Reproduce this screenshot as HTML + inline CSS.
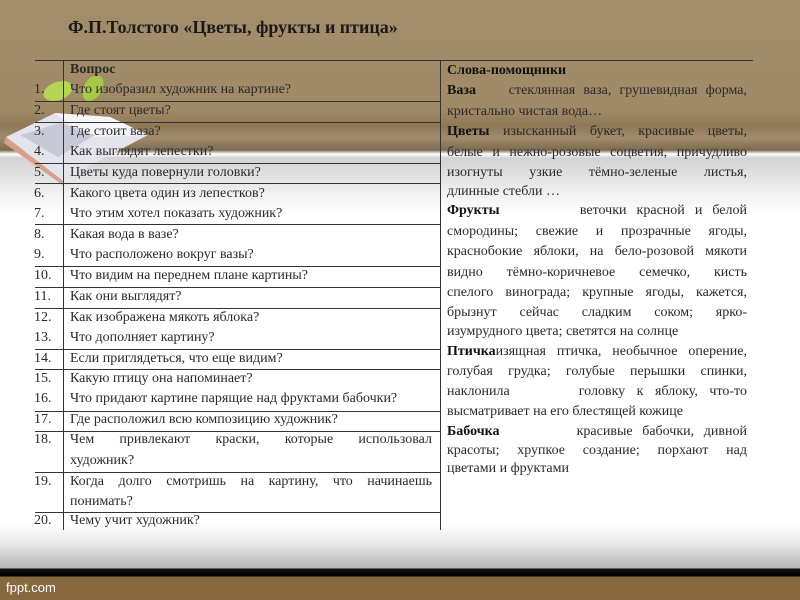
<!DOCTYPE html>
<html><head><meta charset="utf-8"><style>
*{margin:0;padding:0;box-sizing:border-box}
body{width:800px;height:600px;overflow:hidden;position:relative;font-family:"Liberation Serif",serif;color:#222;
background:linear-gradient(to bottom,#a38e6c 0px,#9f8966 110px,#8e7857 126px,#a08b6b 138px,#7d6a50 150px,#ffffff 154px,#d2d2d2 158px,#f2f2f2 195px,#ffffff 215px,#ffffff 525px,#e6e6e6 545px,#b4b4b4 568px,#111 569px,#000 576px,#86693f 577px,#86693f 600px);}
.t{position:absolute;font-size:14px;line-height:20px;white-space:nowrap;color:#2a2a2a}
.h{position:absolute;height:1px;background:#333}
.v{position:absolute;width:1px;background:#333}
.r{position:absolute;left:447px;width:300px;font-size:14px;line-height:20px;text-align:justify;text-align-last:justify;white-space:nowrap;color:#2a2a2a}
.r.l{text-align-last:left}
b{color:#111}
</style></head><body>
<div class="t" style="left:68px;top:17px;font-size:18px;font-weight:bold;color:#1a1a1a">Ф.П.Толстого «Цветы, фрукты и птица»</div>

<svg style="position:absolute;left:0;top:75px" width="160" height="115" viewBox="0 0 160 115">
<ellipse cx="58" cy="16" rx="15" ry="9" fill="#b8dc50" opacity="0.9" transform="rotate(-20 58 16)"/>
<ellipse cx="93" cy="13" rx="9" ry="14" fill="#a6d040" opacity="0.9" transform="rotate(30 93 13)"/>
<path d="M6 62 L55 38 L110 42 L148 60 L62 105 Z" fill="#e4e4ec"/>
<path d="M6 62 L62 105 L64 111 L4 68 Z" fill="#d8a08a"/>
<path d="M55 38 L110 42 L148 60 L88 62 Z" fill="#f6f6fa"/>
<path d="M20 60 L60 48 L95 60 L58 82 Z" fill="#c8c9d6"/>
</svg>

<div class="h" style="left:35px;width:718px;top:60px"></div>
<div class="h" style="left:35px;width:405px;top:101px"></div>
<div class="h" style="left:35px;width:405px;top:122px"></div>
<div class="h" style="left:35px;width:405px;top:163px"></div>
<div class="h" style="left:35px;width:405px;top:183px"></div>
<div class="h" style="left:35px;width:405px;top:224px"></div>
<div class="h" style="left:35px;width:405px;top:266px"></div>
<div class="h" style="left:35px;width:405px;top:287px"></div>
<div class="h" style="left:35px;width:405px;top:308px"></div>
<div class="h" style="left:35px;width:405px;top:349px"></div>
<div class="h" style="left:35px;width:405px;top:369px"></div>
<div class="h" style="left:35px;width:405px;top:411px"></div>
<div class="h" style="left:35px;width:405px;top:431px"></div>
<div class="h" style="left:35px;width:405px;top:472px"></div>
<div class="h" style="left:35px;width:405px;top:512px"></div>
<div class="v" style="left:63px;top:60px;height:470px"></div>
<div class="v" style="left:440px;top:60px;height:470px"></div>

<div class="t" style="left:70px;top:60px;font-weight:bold">Вопрос</div>
<div class="t" style="left:70px;top:80px">Что изобразил художник на картине?</div>
<div class="t" style="left:70px;top:101px">Где стоят цветы?</div>
<div class="t" style="left:70px;top:122px">Где стоит ваза?</div>
<div class="t" style="left:70px;top:142px">Как выглядят лепестки?</div>
<div class="t" style="left:70px;top:163px">Цветы куда повернули головки?</div>
<div class="t" style="left:70px;top:184px">Какого цвета один из лепестков?</div>
<div class="t" style="left:70px;top:204px">Что этим хотел показать художник?</div>
<div class="t" style="left:70px;top:225px">Какая вода в вазе?</div>
<div class="t" style="left:70px;top:245px">Что расположено вокруг вазы?</div>
<div class="t" style="left:70px;top:266px">Что видим на переднем плане картины?</div>
<div class="t" style="left:70px;top:287px">Как они выглядят?</div>
<div class="t" style="left:70px;top:308px">Как изображена мякоть яблока?</div>
<div class="t" style="left:70px;top:328px">Что дополняет картину?</div>
<div class="t" style="left:70px;top:349px">Если приглядеться, что еще видим?</div>
<div class="t" style="left:70px;top:369px">Какую птицу она напоминает?</div>
<div class="t" style="left:70px;top:389px">Что придают картине парящие над фруктами бабочки?</div>
<div class="t" style="left:70px;top:410px">Где расположил всю композицию художник?</div>
<div class="t" style="left:70px;top:430px;width:362px;text-align:justify;text-align-last:justify">Чем привлекают краски, которые использовал</div>
<div class="t" style="left:70px;top:451px">художник?</div>
<div class="t" style="left:70px;top:472px;width:362px;text-align:justify;text-align-last:justify">Когда долго смотришь на картину, что начинаешь</div>
<div class="t" style="left:70px;top:492px">понимать?</div>
<div class="t" style="left:70px;top:511px">Чему учит художник?</div>

<div class="t" style="left:34px;top:80px">1.</div>
<div class="t" style="left:34px;top:101px">2.</div>
<div class="t" style="left:34px;top:122px">3.</div>
<div class="t" style="left:34px;top:142px">4.</div>
<div class="t" style="left:34px;top:163px">5.</div>
<div class="t" style="left:34px;top:184px">6.</div>
<div class="t" style="left:34px;top:204px">7.</div>
<div class="t" style="left:34px;top:225px">8.</div>
<div class="t" style="left:34px;top:245px">9.</div>
<div class="t" style="left:34px;top:266px">10.</div>
<div class="t" style="left:34px;top:287px">11.</div>
<div class="t" style="left:34px;top:308px">12.</div>
<div class="t" style="left:34px;top:328px">13.</div>
<div class="t" style="left:34px;top:349px">14.</div>
<div class="t" style="left:34px;top:369px">15.</div>
<div class="t" style="left:34px;top:389px">16.</div>
<div class="t" style="left:34px;top:410px">17.</div>
<div class="t" style="left:34px;top:430px">18.</div>
<div class="t" style="left:34px;top:472px">19.</div>
<div class="t" style="left:34px;top:511px">20.</div>

<div class="r l" style="top:61px"><b>Слова-помощники</b></div>
<div class="r" style="top:81px"><b>Ваза</b> &nbsp;&nbsp; стеклянная ваза, грушевидная форма,</div>
<div class="r l" style="top:102px">кристально чистая вода…</div>
<div class="r" style="top:122px"><b>Цветы</b> изысканный букет, красивые цветы,</div>
<div class="r" style="top:143px">белые и нежно-розовые соцветия, причудливо</div>
<div class="r" style="top:163px">изогнуты узкие тёмно-зеленые листья,</div>
<div class="r l" style="top:182px">длинные стебли …</div>
<div class="r" style="top:201px"><b>Фрукты</b> &nbsp;&nbsp;&nbsp;&nbsp;&nbsp;&nbsp; веточки красной и белой</div>
<div class="r" style="top:222px">смородины; свежие и прозрачные ягоды,</div>
<div class="r" style="top:242px">краснобокие яблоки, на бело-розовой мякоти</div>
<div class="r" style="top:263px">видно тёмно-коричневое семечко, кисть</div>
<div class="r" style="top:283px">спелого винограда; крупные ягоды, кажется,</div>
<div class="r" style="top:303px">брызнут сейчас сладким соком; ярко-</div>
<div class="r l" style="top:322px">изумрудного цвета; светятся на солнце</div>
<div class="r" style="top:342px"><b>Птичка</b>изящная птичка, необычное оперение,</div>
<div class="r" style="top:362px">голубая грудка; голубые перышки спинки,</div>
<div class="r" style="top:382px">наклонила &nbsp;&nbsp;&nbsp;&nbsp; головку к яблоку, что-то</div>
<div class="r l" style="top:402px">высматривает на его блестящей кожице</div>
<div class="r" style="top:422px"><b>Бабочка</b> &nbsp;&nbsp;&nbsp;&nbsp;&nbsp;&nbsp; красивые бабочки, дивной</div>
<div class="r" style="top:441px">красоты; хрупкое создание; порхают над</div>
<div class="r l" style="top:459px">цветами и фруктами</div>

<div style="position:absolute;left:6px;top:580px;font-family:'Liberation Sans',sans-serif;font-size:13px;color:#fff">fppt.com</div>
</body></html>
